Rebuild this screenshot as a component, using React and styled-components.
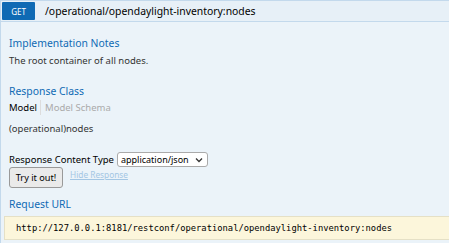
import React from "react";
import styled, { createGlobalStyle } from "styled-components";

const GlobalStyle = createGlobalStyle`
  html, body {
    margin: 0;
    padding: 0;
    background: #ffffff;
  }
  body {
    font-family: "Noto Sans", "Open Sans", sans-serif;
    color: #333;
  }
`;

const Operation = styled.div`
  width: 460px;
`;

const Heading = styled.div`
  display: flex;
  align-items: center;
  height: 20px;
  background: #e7f0f7;
  border: 1px solid #c3d9ec;
  padding-left: 1px;
`;

const Method = styled.span`
  display: inline-flex;
  align-items: center;
  justify-content: center;
  width: 33px;
  height: 18px;
  background: #0f6ab4;
  color: #fff;
  font-size: 8px;
  text-transform: uppercase;
  border-radius: 1px;
`;

const Path = styled.span`
  margin-left: 10px;
  font-size: 10.4px;
  color: #000;
`;

const Content = styled.div`
  background: #ebf3f9;
  border: 1px solid #c3d9ec;
  border-top: none;
  padding: 11px 8px 10px 8px;
  height: 221px;
`;

const Title = styled.h4`
  margin: 0;
  font-size: 10.4px;
  font-weight: normal;
  color: #0f6ab4;
  line-height: 20px;
`;

const Text = styled.p`
  margin: 0;
  font-size: 9.5px;
  line-height: 15px;
  color: #333;
`;

const Section = styled.div`
  margin-top: ${(p) => p.$top || 0}px;
`;

const Tabs = styled.div`
  display: flex;
  align-items: center;
  font-size: 9.5px;
  line-height: 15px;
  margin: -1px 0 6px;
`;

const Tab = styled.span`
  color: ${(p) => (p.$active ? "#000" : "#aaa")};
  padding-right: 3px;
  & + & {
    border-left: 1px solid #ddd;
    padding-left: 4px;
  }
`;

const Row = styled.div`
  display: flex;
  align-items: center;
  gap: 3px;
  margin-top: 16px;
  font-size: 9.5px;
  color: #000;
`;

const Select = styled.div`
  display: inline-flex;
  align-items: center;
  gap: 6px;
  height: 13px;
  padding: 0 4px 0 3px;
  background: #fff;
  border: 1px solid #aaa;
  border-radius: 3px;
  font-size: 9px;
  color: #000;
`;

const Actions = styled.div`
  display: flex;
  align-items: flex-start;
  gap: 7px;
`;

const Button = styled.button`
  font-family: inherit;
  font-size: 9.2px;
  color: #000;
  height: 21px;
  width: 54px;
  padding: 0;
  background: #eaeaea;
  border: 1px solid #999;
  border-radius: 3px;
`;

const Link = styled.a`
  font-size: 8.3px;
  line-height: 13px;
  color: #a3c6e4;
  text-decoration: underline;
  margin-top: 1px;
`;

const Block = styled.pre`
  margin: 2px 0 0 -5px;
  padding: 5px 12px 5px 11px;
  background: #fcf6db;
  border: 1px solid #e5e0c6;
  font-family: "DejaVu Sans Mono", monospace;
  font-size: 8.8px;
  line-height: 12px;
  color: #000;
`;

export default function App() {
  return (
    <>
      <GlobalStyle />
      <Operation>
        <Heading>
          <Method>Get</Method>
          <Path>/operational/opendaylight-inventory:nodes</Path>
        </Heading>
        <Content>
          <Section>
            <Title>Implementation Notes</Title>
            <Text>The root container of all nodes.</Text>
          </Section>
          <Section $top={13}>
            <Title>Response Class</Title>
            <Tabs>
              <Tab $active>Model</Tab>
              <Tab>Model Schema</Tab>
            </Tabs>
            <Text>(operational)nodes</Text>
          </Section>
          <Row>
            Response Content Type
            <Select>
              application/json
              <svg width="8" height="6" viewBox="0 0 8 6">
                <path d="M1 1.5 L4 4.5 L7 1.5" fill="none" stroke="#333" strokeWidth="1.3" />
              </svg>
            </Select>
          </Row>
          <Actions>
            <Button>Try it out!</Button>
            <Link>Hide Response</Link>
          </Actions>
          <Section $top={6}>
            <Title>Request URL</Title>
            <Block>http://127.0.0.1:8181/restconf/operational/opendaylight-inventory:nodes</Block>
          </Section>
        </Content>
      </Operation>
    </>
  );
}
